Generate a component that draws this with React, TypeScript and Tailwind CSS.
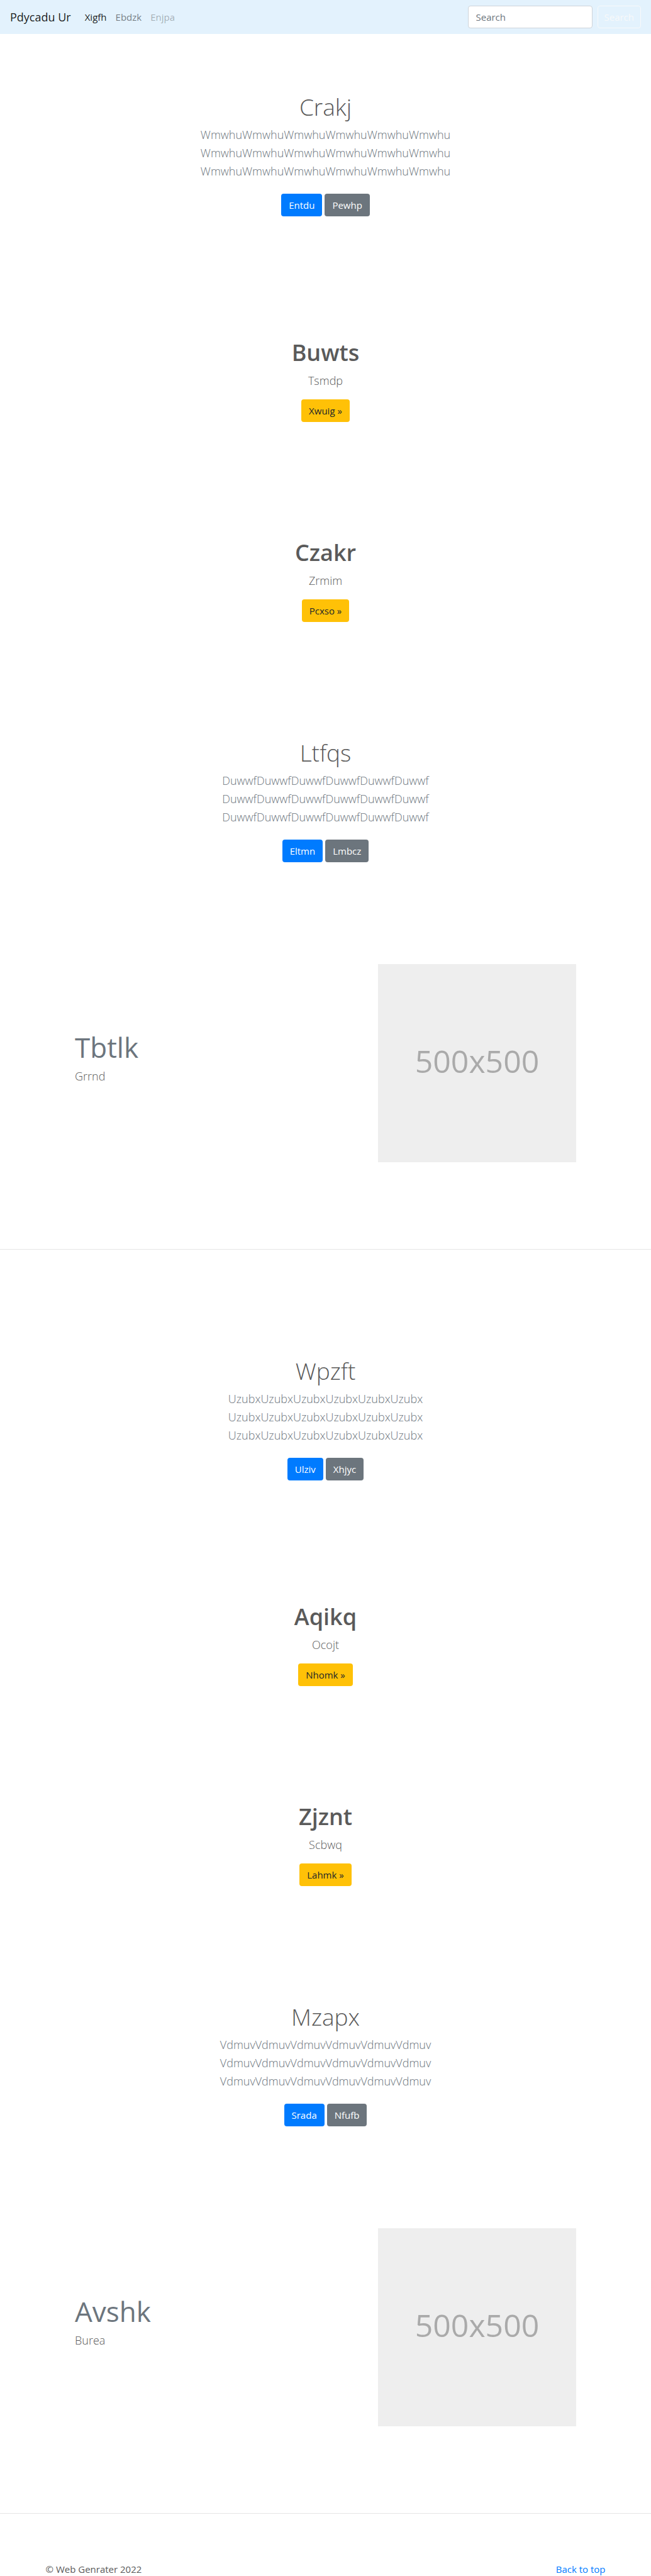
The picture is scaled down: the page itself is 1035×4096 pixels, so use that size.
import React from "react";

const BUTTON =
  "inline-flex h-9 items-center rounded px-3 text-[15px] leading-5 whitespace-nowrap";

type AlbumProps = {
  title: string;
  line: string;
  primary: string;
  secondary: string;
};

function Album({ title, line, primary, secondary }: AlbumProps) {
  return (
    <section className="flex flex-col items-center px-4 pt-[93px] pb-[101px] text-center">
      <h1 className="mb-[7px] text-[37px] leading-[46px] font-light">{title}</h1>
      <p className="mb-[21px] text-[18px] leading-[29px] font-light text-[#6c757d]">
        {line}
        <br />
        {line}
        <br />
        {line}
      </p>
      <div className="flex gap-1">
        <a href="#" className={`${BUTTON} bg-[#007bff] text-white`}>
          {primary}
        </a>
        <a href="#" className={`${BUTTON} bg-[#6c757d] text-white`}>
          {secondary}
        </a>
      </div>
    </section>
  );
}

type CalloutProps = { title: string; text: string; action: string };

function Callout({ title, text, action }: CalloutProps) {
  return (
    <section className="flex flex-col items-center px-4 pt-[93px] pb-[92px] text-center">
      <h1 className="mb-[7px] text-[36px] leading-[46px] font-semibold">{title}</h1>
      <p className="mb-[15px] text-[18px] leading-[29px] font-light">{text}</p>
      <a href="#" className={`${BUTTON} bg-[#ffc107] text-[#212529]`}>
        {action} »
      </a>
    </section>
  );
}

function Feature({ title, text }: { title: string; text: string }) {
  return (
    <section className="border-b border-[#e5e5e5] pt-[61px] pb-[138px]">
      <div className="mx-auto flex max-w-[797px] items-center justify-between">
        <div className="pb-[19px]">
          <h2 className="mb-[3px] text-[44px] leading-[57px] text-[#6c757d]">{title}</h2>
          <p className="text-[18px] leading-[29px] font-light">{text}</p>
        </div>
        <div className="flex aspect-square w-[315px] items-center justify-center bg-[#eeeeee] pb-[6px] text-[50px] text-[#aaaaaa]">
          500x500
        </div>
      </div>
    </section>
  );
}

export default function App() {
  return (
    <div className="bg-white font-['Open_Sans','Noto_Sans',sans-serif] text-[#5a5a5a]">
      <nav className="flex h-[54px] items-center bg-[#e3f2fd] px-4">
        <a href="#" className="mr-[22px] text-[18px] text-black/90">
          Pdycadu Ur
        </a>
        <div className="flex grow gap-[14px] text-[15px]">
          <a href="#" className="text-black/90">
            Xigfh
          </a>
          <a href="#" className="text-black/50">
            Ebdzk
          </a>
          <a href="#" className="text-black/30">
            Enjpa
          </a>
        </div>
        <form className="flex gap-2" onSubmit={(e) => e.preventDefault()}>
          <input
            type="search"
            aria-label="Search"
            placeholder="Search"
            className="h-9 w-[198px] rounded border border-[#ced4da] bg-white px-3 text-[15px] text-[#495057] placeholder:text-[#6c757d]"
          />
          <button
            type="submit"
            className="h-9 rounded border border-[#f8f9fa] px-[10px] text-[15px] text-[#f8f9fa]"
          >
            Search
          </button>
        </form>
      </nav>
      <main>
        <Album title="Crakj" line="WmwhuWmwhuWmwhuWmwhuWmwhuWmwhu" primary="Entdu" secondary="Pewhp" />
        <Callout title="Buwts" text="Tsmdp" action="Xwuig" />
        <Callout title="Czakr" text="Zrmim" action="Pcxso" />
        <Album title="Ltfqs" line="DuwwfDuwwfDuwwfDuwwfDuwwfDuwwf" primary="Eltmn" secondary="Lmbcz" />
        <Feature title="Tbtlk" text="Grrnd" />
        <div className="pt-[77px]">
          <Album title="Wpzft" line="UzubxUzubxUzubxUzubxUzubxUzubx" primary="Ulziv" secondary="Xhjyc" />
        </div>
        <Callout title="Aqikq" text="Ocojt" action="Nhomk" />
        <Callout title="Zjznt" text="Scbwq" action="Lahmk" />
        <Album title="Mzapx" line="VdmuvVdmuvVdmuvVdmuvVdmuvVdmuv" primary="Srada" secondary="Nfufb" />
        <Feature title="Avshk" text="Burea" />
      </main>
      <footer className="mx-auto flex max-w-[890px] justify-between pt-[78px] text-[15px] leading-5">
        <p>© Web Genrater 2022</p>
        <a href="#" className="text-[#007bff]">
          Back to top
        </a>
      </footer>
    </div>
  );
}
